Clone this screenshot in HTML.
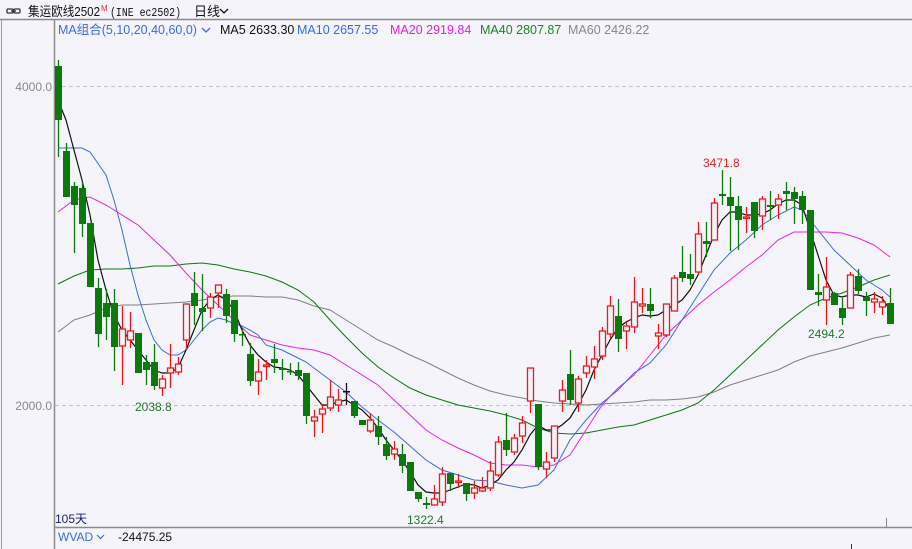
<!DOCTYPE html>
<html><head><meta charset="utf-8">
<style>
html,body{margin:0;padding:0;background:#f4f4fa;width:912px;height:549px;overflow:hidden;font-family:"Liberation Sans","Noto Sans CJK SC",sans-serif}
svg{position:absolute;left:0;top:0}
</style></head><body>
<svg id="s" width="912" height="549" xmlns="http://www.w3.org/2000/svg" font-family="Liberation Sans, Noto Sans CJK SC, sans-serif">
<rect width="912" height="549" fill="#f4f4fa"/>
<line x1="0" y1="19.5" x2="912" y2="19.5" stroke="#8a8a8a" stroke-width="1.5"/>
<line x1="1.5" y1="20" x2="1.5" y2="549" stroke="#9a9a9a"/>
<line x1="54.5" y1="20" x2="54.5" y2="549" stroke="#8a8a8a" stroke-width="1.5"/>
<line x1="55" y1="527.5" x2="912" y2="527.5" stroke="#8a8a8a" stroke-width="1.5"/>
<line x1="55" y1="86.5" x2="912" y2="86.5" stroke="#c4c4c4" stroke-dasharray="4,3"/>
<line x1="55" y1="405.5" x2="912" y2="405.5" stroke="#c4c4c4" stroke-dasharray="4,3"/>
<line x1="886.5" y1="518" x2="886.5" y2="527" stroke="#888"/>
<line x1="851.5" y1="544" x2="851.5" y2="549" stroke="#333"/>
<!-- header -->
<g fill="none" stroke="#333" stroke-width="1.3"><rect x="7" y="9" width="6" height="4" rx="1"/><rect x="14" y="9" width="6" height="4" rx="1"/><line x1="11" y1="11" x2="16" y2="11"/></g>
<text x="28" y="16" font-size="13" fill="#111" textLength="72" lengthAdjust="spacingAndGlyphs">集运欧线2502</text>
<text x="101" y="11" font-size="8" fill="#e03030">M</text>
<text x="110" y="16" font-size="12" fill="#111" font-family="Liberation Mono, monospace" textLength="71" lengthAdjust="spacingAndGlyphs">(INE ec2502)</text>
<text x="194" y="16" font-size="13" fill="#111">日线</text>
<path d="M220 9 l4 4 l4 -4" fill="none" stroke="#111" stroke-width="1.3"/>
<text x="58" y="34" font-size="12.5" fill="#3a6be0">MA组合(5,10,20,40,60,0)</text>
<path d="M202 28 l4 4 l4 -4" fill="none" stroke="#3a6be0" stroke-width="1.3"/>
<text x="220" y="34" font-size="12.5" fill="#111">MA5 2633.30</text>
<text x="297" y="34" font-size="12.5" fill="#3a6be0">MA10 2657.55</text>
<text x="390" y="34" font-size="12.5" fill="#e020e0">MA20 2919.84</text>
<text x="480" y="34" font-size="12.5" fill="#1a8a1a">MA40 2807.87</text>
<text x="568" y="34" font-size="12.5" fill="#888">MA60 2426.22</text>
<text x="52" y="91" font-size="12" fill="#888" text-anchor="end">4000.0</text>
<text x="52" y="410" font-size="12" fill="#888" text-anchor="end">2000.0</text>
<text x="55" y="523" font-size="12" fill="#1a1a7a">105天</text>
<text x="58" y="541" font-size="12" fill="#3a6be0">WVAD</text>
<path d="M97 535 l3.5 3.5 l3.5 -3.5" fill="none" stroke="#3a6be0" stroke-width="1.2"/>
<text x="118" y="541" font-size="12" fill="#111">-24475.25</text>
<g id="lines"></g>
<g id="cands"></g>
<text x="703" y="167" font-size="12" fill="#e82020">3471.8</text>
<text x="135" y="411" font-size="12" fill="#217a2a">2038.8</text>
<text x="407" y="524" font-size="12" fill="#217a2a">1322.4</text>
<text x="808" y="338" font-size="12" fill="#217a2a">2494.2</text>
</svg>
<script>
var C=[[66,120,60,157,'g'],[151,197,143,197,'g'],[186,205,182,253,'g'],[188,224,182,237,'g'],[223,287,223,287,'g'],[288,334,278,347,'g'],[303,317,289,340,'g'],[303,347,289,371,'g'],[329,346,306,385,'r'],[331,340,312,348,'r'],
[333,373,333,373,'g'],[362,370,355,385,'g'],[362,386,344,390,'g'],[379,388,375,396,'r'],[368,373,344,388,'r'],[364,372,357,375,'r'],[304,340,304,350,'r'],[293,306,272,325,'g'],[308,312,274,331,'g'],[297,308,293,318,'r'],
[285,293,285,308,'r'],[294,316,289,323,'g'],[300,334,300,342,'g'],[334,335,328,346,'g'],[354,381,343,386,'g'],[372,381,359,395,'r'],[365,366,360,380,'r'],[359,363,344,373,'g'],[368,370,359,380,'g'],[371,372,363,375,'g'],
[370,376,362,380,'g'],[373,416,373,424,'g'],[417,421,410,437,'r'],[409,414,404,433,'r'],[397,408,380,411,'r'],[400,405,389,412,'r'],[391,392,383,405,'k'],[401,416,401,418,'g'],[420,425,420,425,'g'],[420,431,413,433,'r'],
[426,437,416,445,'g'],[444,456,437,460,'g'],[449,454,441,460,'r'],[454,466,444,473,'g'],[462,491,462,491,'g'],[492,499,492,502,'g'],[503,505,497,509,'g'],[499,505,485,505,'r'],[474,502,467,506,'r'],[473,484,473,491,'g'],
[481,482,474,488,'r'],[483,494,483,501,'g'],[488,493,481,499,'r'],[488,491,477,492,'r'],[471,488,461,491,'r'],[442,475,436,477,'r'],[440,450,413,456,'g'],[438,452,434,455,'r'],[423,436,416,443,'r'],[368,401,368,413,'r'],
[404,467,404,470,'g'],[462,469,452,478,'r'],[426,458,426,462,'r'],[390,401,380,412,'r'],[374,400,350,405,'g'],[379,403,376,412,'r'],[366,373,356,378,'r'],[359,367,346,379,'r'],[331,356,327,360,'r'],[306,334,296,338,'r'],
[316,339,299,352,'g'],[326,331,322,349,'r'],[302,327,277,333,'r'],[304,306,288,313,'r'],[304,311,288,318,'g'],[333,336,324,349,'r'],[304,335,304,337,'r'],[278,311,275,311,'r'],[272,278,246,282,'g'],[274,279,254,285,'g'],
[234,272,222,274,'r'],[241,244,222,257,'g'],[203,240,198,240,'r'],[194,196,170,205,'g'],[197,206,177,251,'g'],[206,220,196,250,'g'],[217,218,207,233,'r'],[202,231,202,238,'g'],[199,216,196,230,'r'],[205,207,191,220,'g'],
[199,205,194,219,'r'],[191,194,182,210,'g'],[192,199,187,224,'g'],[196,210,191,224,'g'],[210,290,210,290,'g'],[292,295,274,306,'g'],[287,300,257,325,'r'],[293,305,292,305,'g'],[308,318,298,325,'g'],[275,308,272,308,'r'],
[276,291,269,294,'g'],[297,301,292,316,'g'],[299,302,292,313,'r'],[302,307,296,315,'r'],[303,324,288,324,'g']];
var h='';
C.forEach(function(c,i){var x=58+8*i;var col=c[4]=='g'?'#0a7a0a':(c[4]=='r'?'#f01818':'#111');
h+='<line x1="'+(x+.5)+'" y1="'+c[2]+'" x2="'+(x+.5)+'" y2="'+c[3]+'" stroke="'+col+'" stroke-width="1.3"/>';
var t=c[0],b=Math.max(c[1],c[0]+1.5);
if(c[4]=='r')h+='<rect x="'+(x-2.5)+'" y="'+t+'" width="6" height="'+(b-t)+'" fill="#f4f4fa" stroke="'+col+'" stroke-width="1.3"/>';
else h+='<rect x="'+(x-3)+'" y="'+t+'" width="7" height="'+(b-t)+'" fill="'+col+'"/>';});
document.getElementById('cands').innerHTML=h;
function P(a,c,w){return '<polyline fill="none" stroke="'+c+'" stroke-width="'+w+'" points="'+a+'"/>';}
var ma5="58,100 66,120 74,150 82,180 90,215 98,260 106,290 114,315 122,330 130,340 138,350 146,360 154,370 162,373 170,373 178,368 186,350 194,330 202,310 210,300 218,295 226,300 234,310 242,330 250,345 258,355 266,362 274,367 282,368 290,370 298,375 306,385 314,395 322,405 330,405 338,402 346,400 354,405 362,410 370,418 378,428 386,440 394,450 402,460 410,472 418,485 426,492 434,493 442,493 450,490 458,487 466,484 474,485 482,488 490,485 498,480 506,470 514,462 522,450 530,435 538,425 546,430 554,430 562,425 570,418 578,405 586,390 594,370 602,355 610,340 618,328 626,322 634,318 642,315 650,316 658,315 666,310 674,305 682,300 690,290 698,275 706,255 714,235 722,220 730,212 738,212 746,215 754,215 762,214 770,210 778,204 786,200 794,200 802,205 810,230 818,255 826,280 834,295 842,297 850,295 858,295 866,297 874,294 882,298 890,310";
var ma10="58,148 82,148 90,152 106,175 114,200 122,230 130,265 138,295 146,320 154,340 162,350 170,355 178,355 186,350 194,340 202,330 210,322 218,318 226,320 234,324 242,326 250,330 258,335 266,345 282,350 298,358 306,362 330,380 346,392 362,407 378,420 394,432 410,446 426,460 442,470 458,475 474,480 490,481 506,485 522,488 538,485 554,470 570,440 586,420 602,403 618,390 634,373 650,363 666,345 682,320 698,295 714,270 730,253 746,240 762,225 778,215 794,207 802,210 818,230 834,250 850,265 866,280 882,290 890,297";
var ma20="58,212 74,200 90,197 106,205 122,215 138,225 154,240 170,255 186,273 202,290 218,305 234,320 250,335 266,340 282,345 298,348 314,350 330,355 346,365 362,375 378,385 394,400 410,415 426,430 442,440 458,448 474,455 490,463 506,465 522,465 538,467 554,465 570,455 586,430 602,405 618,388 634,375 650,355 666,335 682,320 698,305 714,292 730,280 746,267 762,255 778,240 794,232 810,232 826,232 842,233 858,238 874,245 890,257";
var ma40="58,284 74,276 90,270 106,269 122,269 138,268 154,266 170,266 186,264 202,263 218,265 234,269 250,272 266,276 282,282 298,290 314,302 330,320 346,337 362,353 378,367 394,378 410,388 426,395 442,400 458,405 474,408 490,411 506,415 522,420 538,428 554,433 570,434 586,433 602,430 618,427 634,425 650,420 666,415 682,410 698,403 714,390 730,375 746,360 762,345 778,330 794,317 810,305 826,298 842,293 858,287 874,280 890,275";
var ma60="58,332 74,320 90,315 106,308 122,305 138,305 154,304 170,303 186,302 202,300 218,297 234,296 250,296 266,297 282,297 298,300 314,306 330,310 346,320 362,330 378,340 394,347 410,355 426,362 442,370 458,378 474,385 490,391 506,395 522,398 538,401 554,403 570,404 586,405 602,404 618,403 634,402 650,400 666,400 682,399 698,397 714,392 730,385 746,380 762,375 778,370 794,362 810,356 826,352 842,348 858,343 874,338 890,335";
document.getElementById('lines').innerHTML=P(ma60,'#808080',1)+P(ma40,'#0a7a0a',1)+P(ma20,'#ee20ee',1)+P(ma10,'#3a6be0',1)+P(ma5,'#111',1.2);
</script>
</body></html>
